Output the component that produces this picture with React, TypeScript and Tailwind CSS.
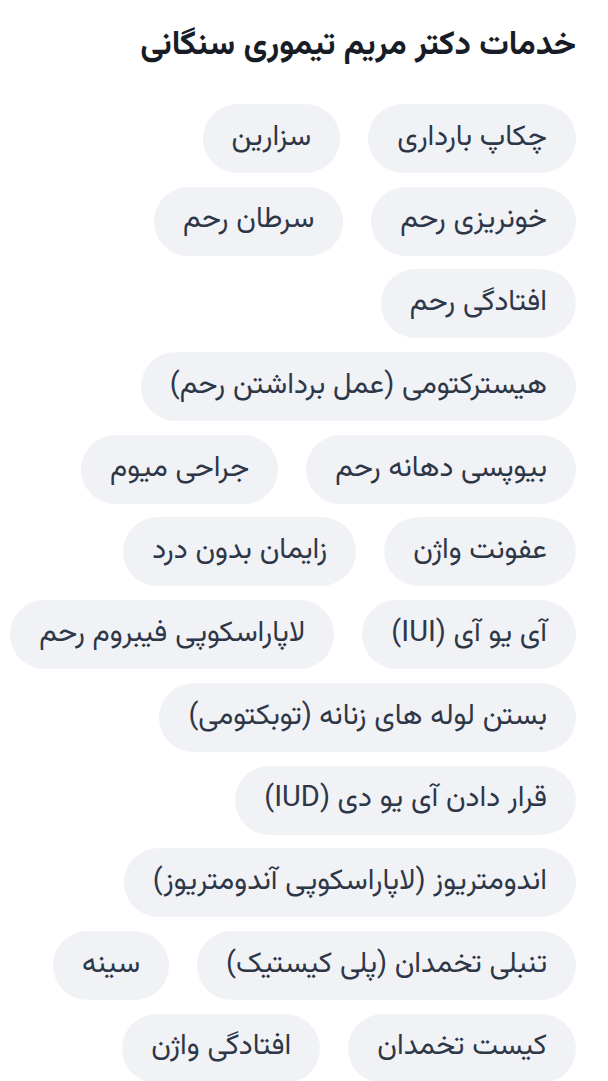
const services = [
  "چکاپ بارداری",
  "سزارین",
  "خونریزی رحم",
  "سرطان رحم",
  "افتادگی رحم",
  "هیسترکتومی (عمل برداشتن رحم)",
  "بیوپسی دهانه رحم",
  "جراحی میوم",
  "عفونت واژن",
  "زایمان بدون درد",
  "آی یو آی (IUI)",
  "لاپاراسکوپی فیبروم رحم",
  "بستن لوله های زنانه (توبکتومی)",
  "قرار دادن آی یو دی (IUD)",
  "اندومتریوز (لاپاراسکوپی آندومتریوز)",
  "تنبلی تخمدان (پلی کیستیک)",
  "سینه",
  "کیست تخمدان",
  "افتادگی واژن",
];

export default function App() {
  return (
    <div
      dir="rtl"
      className="min-h-screen bg-white pt-[20px] pr-[32px] pl-[4px] font-['Vazirmatn','Noto_Sans_Arabic','DejaVu_Sans',sans-serif]"
    >
      <h2 className="text-[33px] leading-[52px] font-bold text-[#171c26]">
        خدمات دکتر مریم تیموری سنگانی
      </h2>
      <div className="mt-[32px] flex flex-wrap gap-x-[28px] gap-y-[13.7px]">
        {services.map((s) => (
          <span
            key={s}
            className="flex h-[69px] items-center rounded-full bg-[#f1f2f6] px-[29px] text-[29px] text-[#2d3748]"
          >
            {s}
          </span>
        ))}
      </div>
    </div>
  );
}
